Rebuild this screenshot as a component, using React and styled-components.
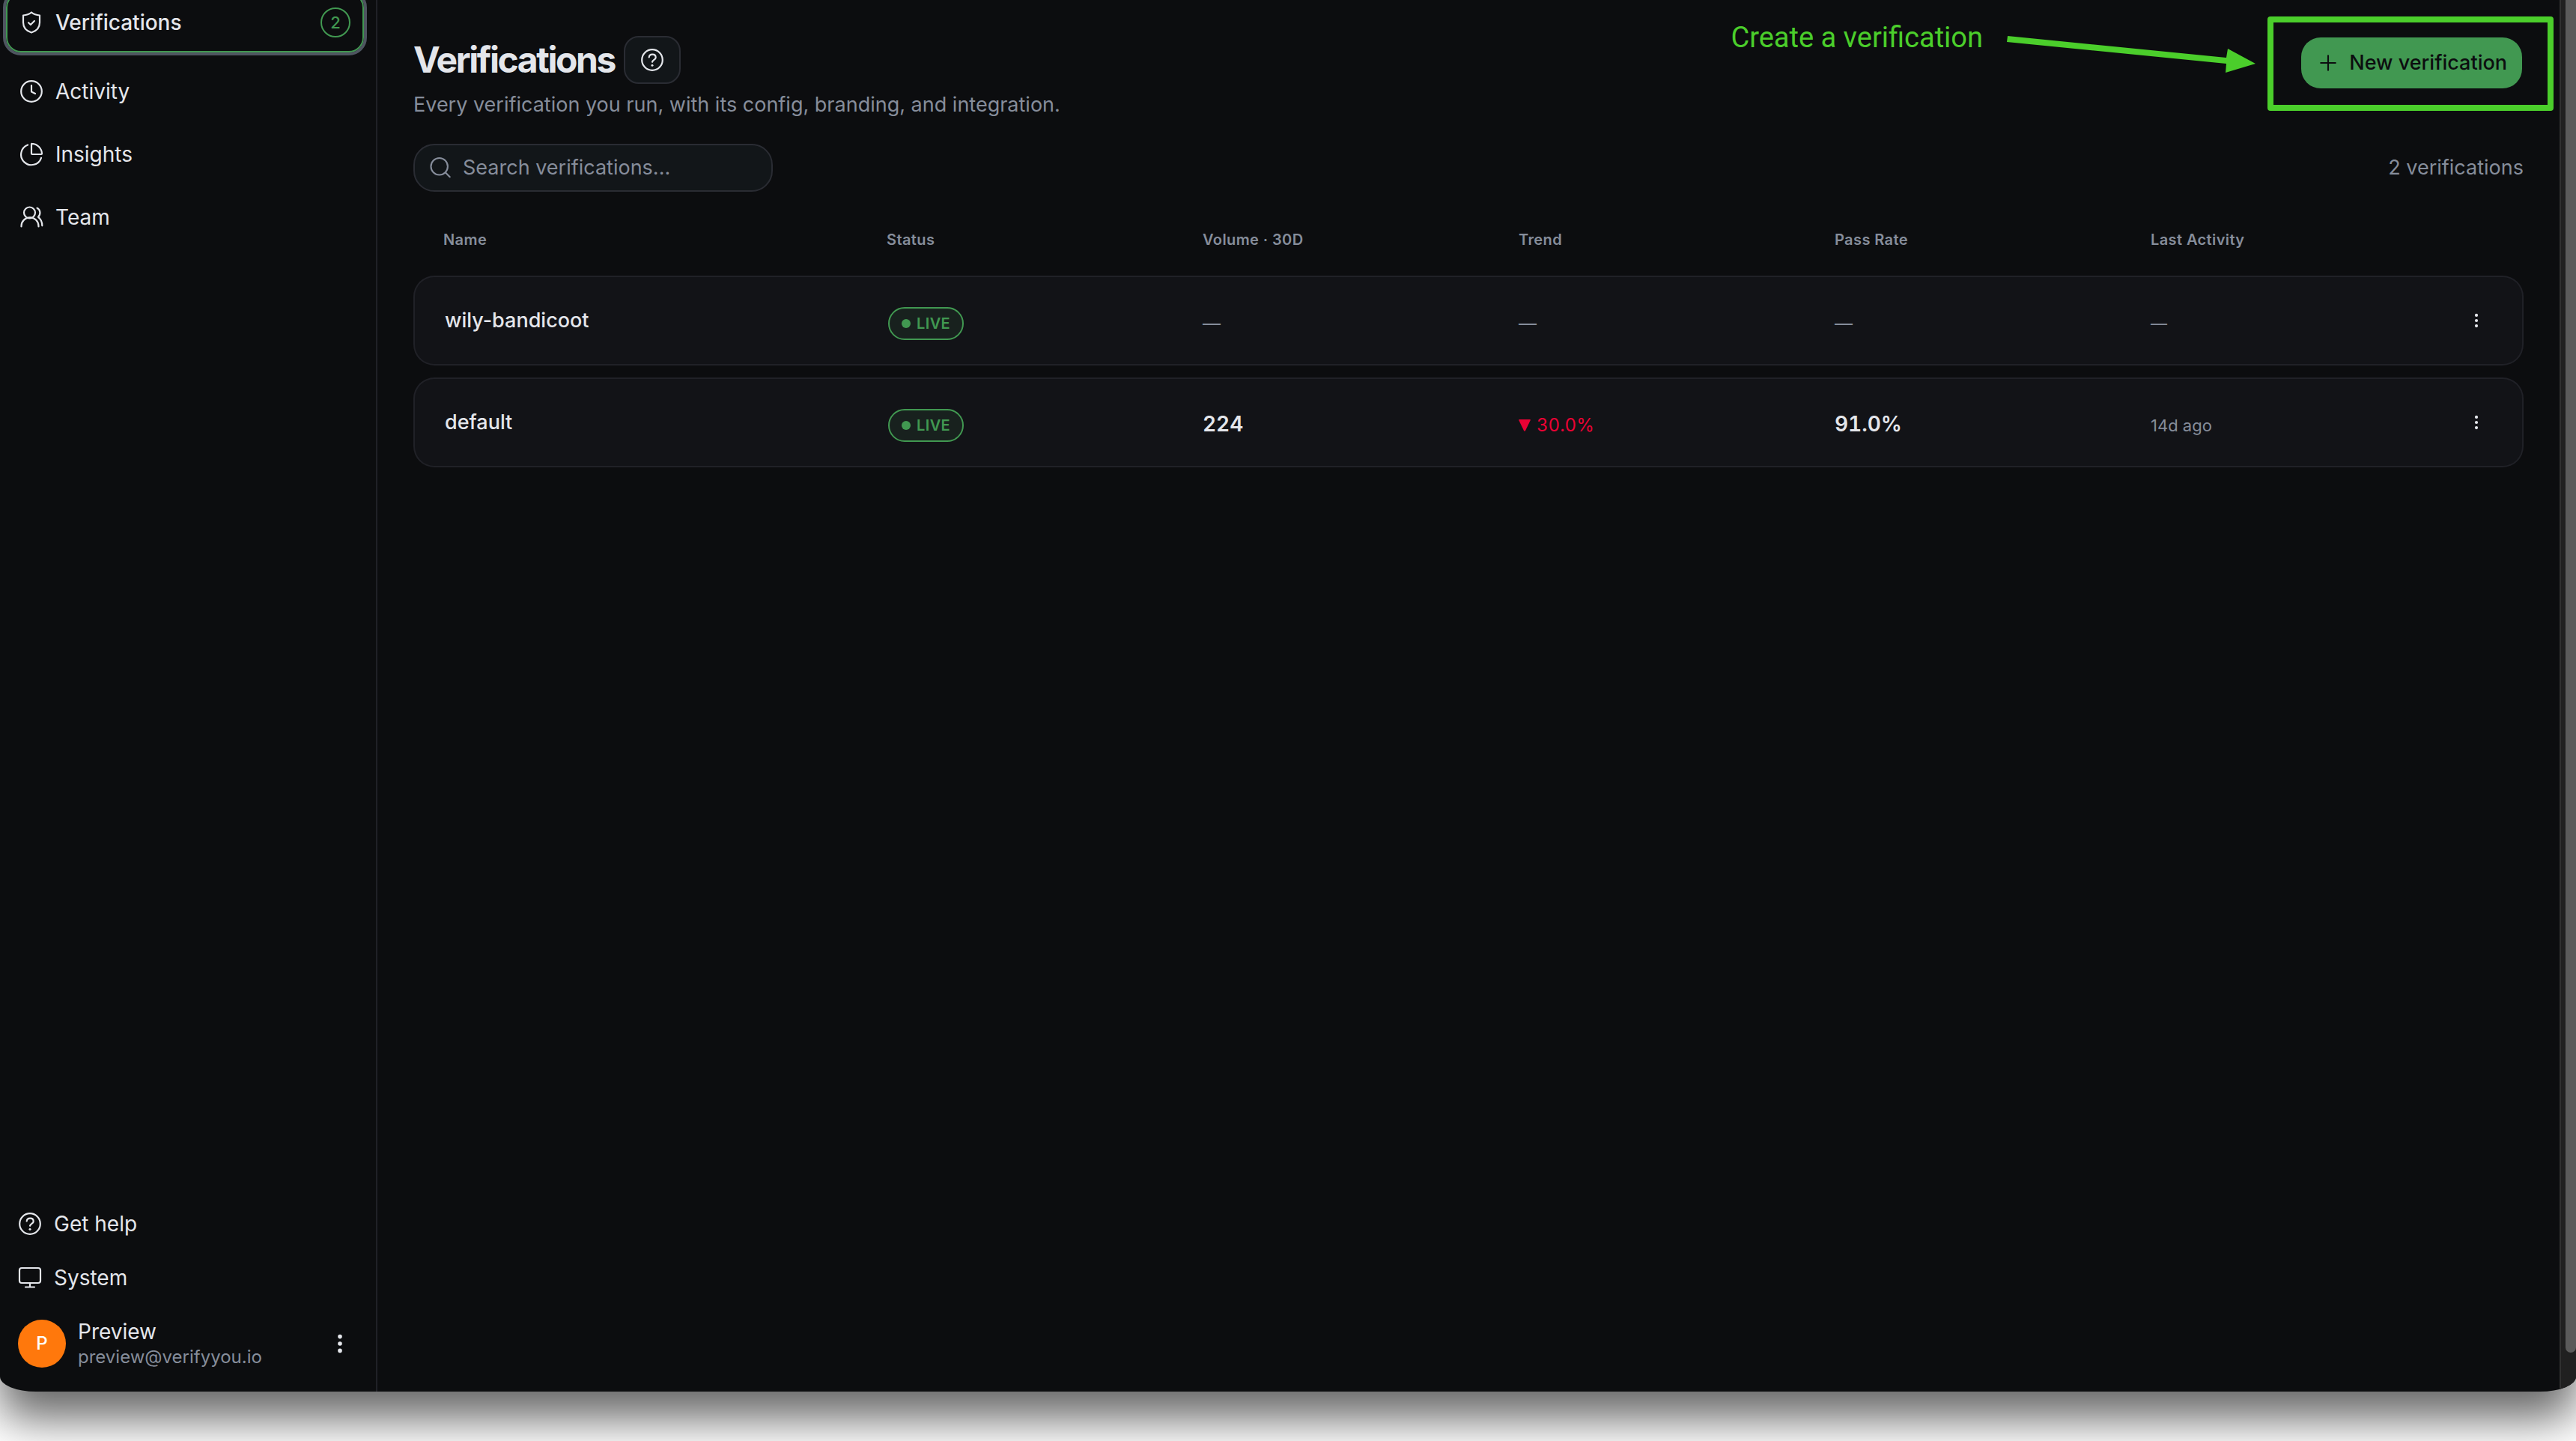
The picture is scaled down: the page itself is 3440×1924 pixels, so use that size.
import React from "react";
import styled, { createGlobalStyle } from "styled-components";

const Global = createGlobalStyle`
  *, *::before, *::after { box-sizing: border-box; }
  html { background: #ffffff; }
  body {
    margin: 0;
    overflow: hidden;
    background: #ffffff;
    color: #e4e6eb;
    font-family: Inter, "Liberation Sans", sans-serif;
    font-size: 28px;
    line-height: 40px;
  }
  button, input { font: inherit; color: inherit; }
  button { cursor: pointer; }
  a { color: inherit; text-decoration: none; }
`;

const Stage = styled.div`
  min-height: 100vh;
  display: flex;
  flex-direction: column;
  padding-bottom: 66px;
`;

const Window = styled.div`
  flex: 1;
  display: flex;
  background: #0c0d0f;
  border-radius: 0 0 48px 48px / 0 0 20px 20px;
  box-shadow: 0 36px 60px 0 rgba(0, 0, 0, 0.6);
`;

const Clip = styled.div`
  flex: 1;
  display: flex;
  overflow: hidden;
  border-radius: inherit;
`;

const Sidebar = styled.aside`
  width: 504px;
  flex: none;
  display: flex;
  flex-direction: column;
  justify-content: space-between;
  border-right: 2px solid #202127;
  padding: 0 16px 30px 8px;
`;

const NavList = styled.ul`
  list-style: none;
  margin: -10px 0 0;
  padding: 0;
  display: flex;
  flex-direction: column;
  gap: 4px;
`;

const NavItem = styled.li`
  padding-bottom: ${(p) => (p.$current ? "8px" : "0")};
`;

const NavLink = styled.a`
  display: flex;
  align-items: center;
  gap: 16px;
  height: 80px;
  padding: 0 16px;
  border: 2px solid ${(p) => (p.$current ? "#419851" : "transparent")};
  border-radius: 20px;
  outline: ${(p) => (p.$current ? "4px solid #4e5560" : "none")};
  font-weight: ${(p) => (p.$current ? 500 : 400)};
`;

const Count = styled.span`
  margin-left: auto;
  width: 40px;
  height: 40px;
  display: grid;
  place-items: center;
  border: 2px solid #419851;
  border-radius: 50%;
  color: #419851;
  font-size: 22px;
  line-height: 24px;
`;

const Foot = styled.div`
  display: flex;
  flex-direction: column;
`;

const FootButton = styled.button`
  display: flex;
  align-items: center;
  gap: 16px;
  height: 72px;
  padding: 0 16px;
  border: 0;
  background: none;
  text-align: left;
`;

const Account = styled.div`
  display: flex;
  align-items: center;
  gap: 16px;
  padding: 18px 16px 0;
`;

const Avatar = styled.span`
  width: 64px;
  height: 64px;
  display: grid;
  place-items: center;
  border-radius: 50%;
  background: #ff780c;
  color: #ffffff;
  font-size: 24px;
  font-weight: 500;
`;

const Identity = styled.div`
  flex: 1;
  display: flex;
  flex-direction: column;
  line-height: 36px;
`;

const Email = styled.span`
  color: #868d9b;
  font-size: 24px;
  line-height: 32px;
`;

const IconButton = styled.button`
  width: 32px;
  height: 48px;
  display: grid;
  place-items: center;
  padding: 0;
  border: 0;
  background: none;
`;

const Main = styled.main`
  flex: 1;
  min-width: 0;
  padding: 48px 48px 0;
  font-size: 27px;
`;

const Header = styled.header`
  display: flex;
  justify-content: space-between;
`;

const TitleRow = styled.div`
  display: flex;
  align-items: center;
  gap: 12px;
`;

const Title = styled.h1`
  margin: 0;
  font-size: 48px;
  line-height: 64px;
  font-weight: 700;
  letter-spacing: -0.05em;
`;

const HelpButton = styled.button`
  width: 76px;
  height: 64px;
  display: grid;
  place-items: center;
  padding: 0;
  border: 2px solid #2a2c33;
  border-radius: 20px;
  background: #121619;
`;

const Lead = styled.p`
  margin: 8px 0 0;
  color: #868d9b;
`;

const Actions = styled.div`
  position: relative;
  display: flex;
  align-items: flex-start;
  padding: 2px 2px 0 0;
`;

const PrimaryButton = styled.button`
  display: flex;
  align-items: center;
  gap: 16px;
  height: 68px;
  padding: 0 20px 0 24px;
  border: 0;
  border-radius: 26px;
  background: #419851;
  color: #0c0d0f;
  font-weight: 500;
`;

const Highlight = styled.span`
  position: absolute;
  top: -26px;
  right: -40px;
  width: 382px;
  height: 126px;
  border: 8px solid #4bce2b;
  border-radius: 4px;
  pointer-events: none;
`;

const Callout = styled.div`
  position: absolute;
  top: -26px;
  right: 358px;
  display: flex;
  align-items: flex-start;
  gap: 32px;
  color: #4bce2b;
  font-family: Roboto, "Liberation Sans", sans-serif;
  font-size: 38px;
  line-height: 56px;
  white-space: nowrap;
`;

const Arrow = styled.svg`
  margin-top: 22px;
`;

const Toolbar = styled.div`
  display: flex;
  align-items: center;
  justify-content: space-between;
  margin-top: 32px;
  color: #868d9b;
`;

const Search = styled.label`
  display: flex;
  align-items: center;
  gap: 16px;
  width: 480px;
  height: 64px;
  padding: 0 20px;
  border: 2px solid #2a2c33;
  border-radius: 28px;
  background: #121619;
`;

const SearchInput = styled.input`
  flex: 1;
  min-width: 0;
  padding: 0;
  border: 0;
  outline: 0;
  background: none;
  &::placeholder { color: #868d9b; opacity: 1; }
`;

const Table = styled.table`
  width: 100%;
  table-layout: fixed;
  margin-top: 16px;
  border-collapse: separate;
  border-spacing: 0 16px;
`;

const Head = styled.th`
  width: ${(p) => p.$width};
  height: 64px;
  padding: 0 0 0 ${(p) => (p.$first ? "40px" : "0")};
  color: #868d9b;
  font-size: 20px;
  line-height: 32px;
  font-weight: 600;
  letter-spacing: 0.02em;
  text-align: left;
`;

const cellTone = {
  name: { color: "#e4e6eb", size: "27px", weight: 500, top: "0" },
  value: { color: "#e4e6eb", size: "28px", weight: 600, top: "4px" },
  muted: { color: "#868d9b", size: "24px", weight: 400, top: "8px" },
  small: { color: "#868d9b", size: "22px", weight: 400, top: "8px" },
};

const Cell = styled.td`
  height: 120px;
  padding: ${(p) => cellTone[p.$tone].top} 0 0;
  border: solid #202127;
  border-width: 2px 0;
  background: #121317;
  color: ${(p) => cellTone[p.$tone].color};
  font-size: ${(p) => cellTone[p.$tone].size};
  font-weight: ${(p) => cellTone[p.$tone].weight};
  font-variant-numeric: ${(p) => (p.$tone === "value" ? "tabular-nums" : "normal")};
  &:first-child {
    padding-left: 40px;
    border-left-width: 2px;
    border-radius: 28px 0 0 28px;
  }
  &:last-child {
    padding-right: 48px;
    border-right-width: 2px;
    border-radius: 0 28px 28px 0;
  }
`;

const MenuSlot = styled.div`
  display: flex;
  justify-content: flex-end;
`;

const Live = styled.span`
  display: inline-flex;
  align-items: center;
  gap: 8px;
  height: 44px;
  margin-left: 2px;
  padding: 0 16px;
  border: 2px solid #419851;
  border-radius: 22px;
  background: #18211e;
  color: #419851;
  font-size: 20px;
  font-weight: 600;
  letter-spacing: 0.02em;
  vertical-align: middle;
`;

const Dot = styled.span`
  width: 12px;
  height: 12px;
  border-radius: 50%;
  background: #419851;
`;

const Trend = styled.span`
  display: flex;
  align-items: center;
  gap: 8px;
  color: #ea0234;
  font-size: 24px;
  font-variant-numeric: tabular-nums;
`;

const ScrollTrack = styled.div`
  width: 22px;
  flex: none;
  padding: 0 0 52px 6px;
  border-left: 2px solid #303030;
  background: #202020;
`;

const ScrollThumb = styled.div`
  height: 100%;
  border-radius: 0 0 8px 8px;
  background: #5a5a5a;
`;

const Icon = ({ size = 32, stroke = 2, children }) => (
  <svg width={size} height={size} viewBox="0 0 32 32" fill="none" stroke="currentColor"
    strokeWidth={stroke} strokeLinecap="round" strokeLinejoin="round" aria-hidden="true">
    {children}
  </svg>
);

const ShieldIcon = () => (
  <Icon stroke={2.2}>
    <path d="M16 2.5c-3 2.5-6.500 3.700-11 4v9.500c0 7 4.500 11.500 11 13.500 6.500-2 11-6.500 11-13.500V6.500c-4.500-.3-8-1.500-11-4z" />
    <path d="M12 16.300l2.900 2.700 5-5" />
  </Icon>
);
const ClockIcon = () => (
  <Icon stroke={2.2}><circle cx="16" cy="16" r="13.800" /><path d="M16 8v8.500l5 2.500" /></Icon>
);
const PieIcon = () => (
  <Icon stroke={2.2}>
    <path d="M11 3.500A13.800 13.800 0 1 0 29 20.800" />
    <path d="M16 2.500q0-.8.9-.7A14 14 0 0 1 30 15q0 1-.9 1H17q-1 0-1-1z" />
  </Icon>
);
const UsersIcon = () => (
  <Icon stroke={2.2}>
    <circle cx="13.500" cy="10" r="7.500" />
    <path d="M2.500 28.500v-.8a11.500 11.500 0 0 1 23 .3v.5" />
    <path d="M23.500 3.800c4.500 2 5.300 8.500 1.500 12 3.200 2.300 5.300 6.500 5.300 11.500" />
  </Icon>
);
const HelpIcon = () => (
  <Icon stroke={2.2}>
    <circle cx="16" cy="16" r="13.800" />
    <path d="M11.700 12.500c.5-5.300 9-5.100 9 .2 0 3-4.200 3.200-4.700 6" />
    <circle cx="16" cy="23.300" r="1.500" fill="currentColor" stroke="none" />
  </Icon>
);
const MonitorIcon = () => (
  <Icon stroke={2.2}>
    <rect x="2" y="3" width="28" height="20" rx="3" /><path d="M16 23v5M10 28.500h12" />
  </Icon>
);
const SearchIcon = () => (
  <Icon size={28} stroke={2.4}><circle cx="14.500" cy="14" r="12.800" /><path d="M24 23.500l6.500 6.500" /></Icon>
);
const PlusIcon = () => (
  <Icon size={24} stroke={2.8}><path d="M16 3v26M3 16h26" /></Icon>
);
const DotsIcon = ({ size = 32 }) => (
  <svg width={size} height={size} viewBox="0 0 32 32" fill="currentColor" aria-hidden="true">
    <circle cx="16" cy="6.600" r="2.800" /><circle cx="16" cy="16" r="2.800" /><circle cx="16" cy="25.400" r="2.800" />
  </svg>
);

const nav = [
  { label: "Verifications", icon: ShieldIcon, count: 2, current: true },
  { label: "Activity", icon: ClockIcon },
  { label: "Insights", icon: PieIcon },
  { label: "Team", icon: UsersIcon },
];

const columns = [
  ["Name", "632px"],
  ["Status"],
  ["Volume · 30D"],
  ["Trend"],
  ["Pass Rate"],
  ["Last Activity"],
];

const rows = [
  { name: "wily-bandicoot" },
  { name: "default", volume: "224", trend: "30.0%", pass: "91.0%", last: "14d ago" },
];

export default function App() {
  return (
    <>
      <Global />
      <Stage>
        <Window>
          <Clip>
            <Sidebar>
              <nav>
                <NavList>
                  {nav.map(({ label, icon: Glyph, count, current }) => (
                    <NavItem key={label} $current={current}>
                      <NavLink href="#" $current={current} aria-current={current ? "page" : undefined}>
                        <Glyph />
                        {label}
                        {count && <Count>{count}</Count>}
                      </NavLink>
                    </NavItem>
                  ))}
                </NavList>
              </nav>
              <Foot>
                <FootButton type="button"><HelpIcon />Get help</FootButton>
                <FootButton type="button"><MonitorIcon />System</FootButton>
                <Account>
                  <Avatar>P</Avatar>
                  <Identity>
                    <span>Preview</span>
                    <Email>preview@verifyyou.io</Email>
                  </Identity>
                  <IconButton type="button" aria-label="Account menu"><DotsIcon /></IconButton>
                </Account>
              </Foot>
            </Sidebar>
            <Main>
              <Header>
                <div>
                  <TitleRow>
                    <Title>Verifications</Title>
                    <HelpButton type="button" aria-label="About verifications"><HelpIcon /></HelpButton>
                  </TitleRow>
                  <Lead>Every verification you run, with its config, branding, and integration.</Lead>
                </div>
                <Actions>
                  <Callout>
                    <span>Create a verification</span>
                    <Arrow width="332" height="54" viewBox="0 0 332 54" fill="#4bce2b" aria-hidden="true">
                      <path d="M1 4L293 33L295 21L332 41L292 53L293 41L0 12z" />
                    </Arrow>
                  </Callout>
                  <PrimaryButton type="button"><PlusIcon />New verification</PrimaryButton>
                  <Highlight />
                </Actions>
              </Header>
              <Toolbar>
                <Search>
                  <SearchIcon />
                  <SearchInput type="search" placeholder="Search verifications..." aria-label="Search verifications" />
                </Search>
                <span>2 verifications</span>
              </Toolbar>
              <Table>
                <thead>
                  <tr>
                    {columns.map(([label, width], i) => (
                      <Head key={label} $width={width} $first={i === 0}>{label}</Head>
                    ))}
                    <Head $width="76px" aria-label="Actions" />
                  </tr>
                </thead>
                <tbody>
                  {rows.map((r) => (
                    <tr key={r.name}>
                      <Cell $tone="name">{r.name}</Cell>
                      <Cell $tone="muted"><Live><Dot />LIVE</Live></Cell>
                      <Cell $tone={r.volume ? "value" : "muted"}>{r.volume || "—"}</Cell>
                      <Cell $tone="muted">
                        {r.trend ? (
                          <Trend>
                            <svg width="16" height="16" viewBox="0 0 16 16" fill="currentColor" aria-hidden="true">
                              <path d="M1 0h14q1 0 .8 1L9 15q-1 1.500-2 0L.2 1Q0 0 1 0z" />
                            </svg>
                            {r.trend}
                          </Trend>
                        ) : "—"}
                      </Cell>
                      <Cell $tone={r.pass ? "value" : "muted"}>{r.pass || "—"}</Cell>
                      <Cell $tone="small">{r.last || "—"}</Cell>
                      <Cell $tone="name">
                        <MenuSlot>
                          <IconButton type="button" aria-label={`Options for ${r.name}`}><DotsIcon size={24} /></IconButton>
                        </MenuSlot>
                      </Cell>
                    </tr>
                  ))}
                </tbody>
              </Table>
            </Main>
            <ScrollTrack><ScrollThumb /></ScrollTrack>
          </Clip>
        </Window>
      </Stage>
    </>
  );
}
